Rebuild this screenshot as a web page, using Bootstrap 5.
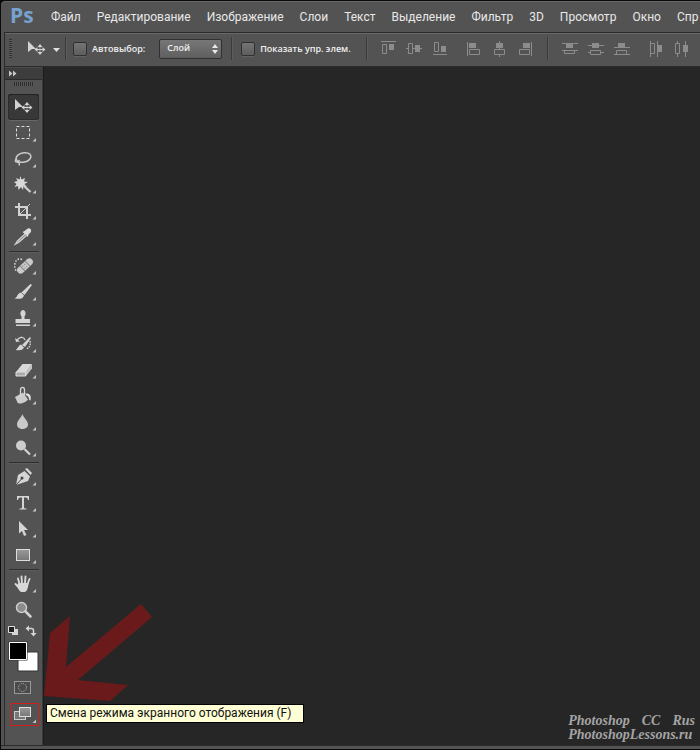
<!DOCTYPE html>
<html lang="ru">
<head>
<meta charset="utf-8">
<meta name="viewport" content="width=device-width, initial-scale=1">
<title>Photoshop CC</title>
<link href="https://cdn.jsdelivr.net/npm/bootstrap@5.3.0/dist/css/bootstrap.min.css" rel="stylesheet">
<style>
body{background:#535353;font-family:Roboto,"Noto Sans",sans-serif;color:#e6e6e6}
svg{display:block}
button{background:none;border:0;padding:0;color:inherit}
.app{border:1px solid #0a0a0a;border-right:0;border-top-left-radius:5px;background:#535353;overflow:hidden;box-shadow:inset 0 1px #666}
.corner{background:#0a0a0a}
.menubar{height:31px;padding-left:9px}
.logo{font:bold 21px/28px "Open Sans",sans-serif;color:#77a1cf;width:41px}
.menubar a{font-size:12px;line-height:32px;color:#e8e8e8;text-decoration:none;white-space:nowrap}
.menus{gap:16px}
.frame{margin-left:3px;border-left:1px solid #2b2b2b}
.options{height:35px;border-top:1px solid #2b2b2b;border-bottom:1px solid #2b2b2b;box-shadow:inset 0 1px #686868;padding:0 0 2px 4px}
.vgrip{width:3px;height:19px;background:repeating-linear-gradient(#303030 0 1px,#5c5c5c 1px 2px)}
.vline{width:2px;height:23px;background:#3a3a3a;border-right:1px solid #5c5c5c}
.options label{font:600 9px/14px "Open Sans",sans-serif;color:#f0f0f0;white-space:nowrap;margin-left:5px}
.tick{appearance:none;width:14px;height:14px;margin:0 0 0 6px;background:linear-gradient(#747474,#5e5e5e);border:1px solid #303030;border-radius:2px;box-shadow:0 1px #626262}
.tick:checked{background:#ddd}
.pick{position:relative;width:63px;height:20px;margin:0 9px 0 14px}
.pick select{display:block;appearance:none;width:100%;height:20px;border:1px solid #303030;border-radius:2px;background:linear-gradient(#777,#5f5f5f);color:#f0f0f0;font:600 9px/16px "Open Sans",sans-serif;padding:0 0 1px 7px}
.pick svg{position:absolute;right:4px;top:5px;pointer-events:none}
.al{width:26px;flex:none}
.al svg{margin:auto}
.first{margin:0 7px 0 15px}
.second{margin:0 8px}
.work{background:#262626}
.tools{width:38px;background:#535353;border-right:1px solid #3a3a3a;box-shadow:1px 0 #1d1d1d;position:relative}
.strip{height:13px;background:#3d3d3d;border-bottom:1px solid #2b2b2b;border-top:1px solid #4a4a4a}
.hgrip{width:20px;height:4px;margin:2px 0 8px 9px;background:repeating-linear-gradient(90deg,#2e2e2e 0 1px,#585858 1px 2px)}
.tool{display:block;width:31px;height:26px;margin-left:3px}
.tool.on{background:#383838;border-radius:3px;box-shadow:inset 0 1px #222,inset 0 0 0 1px #2c2c2c,0 1px #666}
.hsep{height:1px;margin:1px 4px;background:#2e2e2e;width:30px;box-shadow:0 1px #5c5c5c}
.screenmode{margin:8px 0 0 5px}
.swatches{display:block;margin-left:3px}
.tip{position:absolute;left:100%;top:637px;margin-left:4px;z-index:2;background:#ffffd5;border:1px solid #000;color:#111;font-size:12px;line-height:17px;padding:0 12px 0 3px;white-space:nowrap}
.arrow{position:absolute;left:100%;top:534px;margin-left:2px;pointer-events:none}
.sign{font:italic bold 14px/14px "Liberation Serif",serif;color:#a4a4a4;margin:0 5px 3px 0}
.sign .words{gap:12px}
.foot{height:4px;background:#535353;border-top:1px solid #2b2b2b}
</style>
<script src="https://cdn.jsdelivr.net/npm/bootstrap@5.3.0/dist/js/bootstrap.bundle.min.js"></script>
</head>
<body>
<svg width="0" height="0" class="position-absolute">
<defs>
<path id="c" d="M28 18v3.500h-3.500z" fill="#c4c4c4"/>
<linearGradient id="g" x2="0" y2="1"><stop stop-color="#999"/><stop offset="1" stop-color="#777"/></linearGradient>
<g id="mv"><path d="M7 5l8 8h-4l-4 3z" fill="#d2d2d2"/><path d="M14.500 13.500h9M19 9v9" stroke="#d2d2d2"/><path d="M19 8l2.500 3h-5zM19 19l2.500-3h-5zM13.500 13.500l3-2.500v5zM24.500 13.500l-3-2.500v5z" fill="#d2d2d2"/><path d="M17 11.500h1.500v1.500H17zM19.500 11.500H21V13h-1.500zM17 14h1.500v1.500H17zM19.500 14H21v1.500h-1.500z" fill="#555"/></g>
</defs>
</svg>
<div class="corner">
<div class="app d-flex flex-column min-vh-100">
<nav class="menubar d-flex">
<div class="logo flex-shrink-0">Ps</div>
<div class="menus d-flex">
<a href="#">Файл</a><a href="#">Редактирование</a><a href="#">Изображение</a><a href="#">Слои</a><a href="#">Текст</a><a href="#">Выделение</a><a href="#">Фильтр</a><a href="#">3D</a><a href="#">Просмотр</a><a href="#">Окно</a><a href="#">Спр</a>
</div>
</nav>
<div class="frame d-flex flex-column flex-grow-1">
<div class="options d-flex align-items-center overflow-hidden">
<div class="vgrip flex-shrink-0"></div>
<button class="flex-shrink-0 ms-2" aria-label="Перемещение"><svg width="45" height="26"><use href="#mv" x="1"/><path d="M33 12h7l-3.500 4z" fill="#e0e0e0"/></svg></button>
<div class="vline flex-shrink-0"></div>
<input class="tick flex-shrink-0" type="checkbox" id="auto"><label for="auto">Автовыбор:</label>
<div class="pick flex-shrink-0"><select aria-label="Автовыбор: объект"><option>Слой</option><option>Группа</option></select><svg width="6" height="10"><path d="M0 4l3-4 3 4zM0 6l3 4 3-4z" fill="#e8e8e8"/></svg></div>
<div class="vline flex-shrink-0"></div>
<input class="tick flex-shrink-0 ms-2" type="checkbox" id="ctl"><label for="ctl">Показать упр. элем.</label>
<div class="vline first flex-shrink-0"></div>
<button class="al" aria-label="По верхнему краю"><svg width="18" height="18" fill="none" stroke="#8c8c8c"><path d="M2 1.500h15M3.500 4.500h4v9h-4z"/><path d="M10 4h5v6h-5z" fill="#8c8c8c" stroke="none"/></svg></button>
<button class="al" aria-label="По центру по вертикали"><svg width="18" height="18" fill="none" stroke="#8c8c8c"><path d="M1 8.500h2.500M7.500 8.500H17M3.500 3.500h4v10h-4z"/><path d="M10 5h5v7h-5z" fill="#8c8c8c" stroke="none"/></svg></button>
<button class="al" aria-label="По нижнему краю"><svg width="18" height="18" fill="none" stroke="#8c8c8c"><path d="M2 14.500h14M3.500 2.500h4v9h-4z"/><path d="M10 6h5v6h-5z" fill="#8c8c8c" stroke="none"/></svg></button>
<button class="al ms-2" aria-label="По левому краю"><svg width="18" height="18" fill="none" stroke="#8c8c8c"><path d="M2.500 2v14M4.500 9.500h10v5h-10z"/><path d="M4 3h7v5H4z" fill="#8c8c8c" stroke="none"/></svg></button>
<button class="al" aria-label="По центру по горизонтали"><svg width="18" height="18" fill="none" stroke="#8c8c8c"><path d="M8.500 1v8M8.500 14v3M3.500 9.500h10v5h-10z"/><path d="M5 3h7v5H5z" fill="#8c8c8c" stroke="none"/></svg></button>
<button class="al" aria-label="По правому краю"><svg width="18" height="18" fill="none" stroke="#8c8c8c"><path d="M14.500 2v14M2.500 9.500h10v5h-10z"/><path d="M6 3h7v5H6z" fill="#8c8c8c" stroke="none"/></svg></button>
<div class="vline second flex-shrink-0"></div>
<button class="al" aria-label="Распределить верхние края"><svg width="18" height="18" fill="none" stroke="#8c8c8c"><path d="M1 3.500h16M1 10.500h16M3.500 10.500h10v3h-10z"/><path d="M5 4h7v4H5z" fill="#8c8c8c" stroke="none"/></svg></button>
<button class="al" aria-label="Распределить центры по вертикали"><svg width="18" height="18" fill="none" stroke="#8c8c8c"><path d="M1 5.500h16M1 12.500h2.500M13.500 12.500H17M3.500 10.500h10v4h-10z"/><path d="M5 3h7v5H5z" fill="#8c8c8c" stroke="none"/></svg></button>
<button class="al" aria-label="Распределить нижние края"><svg width="18" height="18" fill="none" stroke="#8c8c8c"><path d="M1 7.500h16M1 14.500h16M3.500 10.500h10v4h-10z"/><path d="M5 3h7v4H5z" fill="#8c8c8c" stroke="none"/></svg></button>
<button class="al ms-2" aria-label="Распределить левые края"><svg width="18" height="18" fill="none" stroke="#8c8c8c"><path d="M3.500 1v16M10.500 1v16M3.500 3.500h4v10h-4z"/><path d="M11 5h4v7h-4z" fill="#8c8c8c" stroke="none"/></svg></button>
<button class="al" aria-label="Распределить центры"><svg width="18" height="18" fill="none" stroke="#8c8c8c"><path d="M4.500 1v2.500M4.500 13.500V17M12.500 1v16M2.500 3.500h4v10h-4z"/><path d="M10 5h5v7h-5z" fill="#8c8c8c" stroke="none"/></svg></button>
</div>
<div class="work d-flex flex-grow-1">
<aside class="tools flex-shrink-0">
<div class="strip"><svg width="16" height="11"><path d="M4 2.500l3.500 3L4 8.500zM8 2.500l3.500 3L8 8.500z" fill="#c8c8c8"/></svg></div>
<div class="hgrip"></div>
<button class="tool on" aria-label="Перемещение"><svg width="31" height="26"><use href="#mv"/></svg></button>
<button class="tool" aria-label="Прямоугольная область"><svg width="31" height="26"><rect x="8.500" y="6.500" width="13" height="12" fill="none" stroke="#ddd" stroke-dasharray="3 2"/><use href="#c"/></svg></button>
<button class="tool" aria-label="Лассо"><svg width="31" height="26"><g fill="none" stroke="#ccc" stroke-width="1.500"><ellipse cx="15.500" cy="11.500" rx="7.500" ry="4.700" transform="rotate(-12 15.500 11.500)"/><path d="M8.500 13c-2 1-1 3.500.5 3s3-1 1.500-2M9 16c2 0 3 1 2 3.500"/></g><use href="#c"/></svg></button>
<button class="tool" aria-label="Волшебная палочка"><svg width="31" height="26"><path d="M12.500 4l1 3.500L17 6l-1 3.500 4 .5-3.500 2 2.500 3-3.500-1-.5 4-2-3-2.500 3-.5-4-3.500 1 2-3L6 10l3.500-1L8 6l3.500 1.500z" fill="#d8d8d8"/><path d="M16 14l6.500 6" stroke="#d0d0d0" stroke-width="2.200"/><use href="#c"/></svg></button>
<button class="tool" aria-label="Рамка"><svg width="31" height="26"><path d="M7 9h12v12M11 5v12h12" fill="none" stroke="#d2d2d2" stroke-width="2"/><path d="M12 16l10-10" stroke="#d2d2d2"/><use href="#c"/></svg></button>
<button class="tool" aria-label="Пипетка"><svg width="31" height="26"><path d="M17 10l-7.500 7-2 3 3-1.500 8-7" fill="#777" stroke="#d2d2d2" stroke-width="1.300"/><path d="M14.500 8l2-1 2.500-2c2.500-2 5.500 1 3.500 3.500l-2 2L20 13z" fill="#ddd"/><use href="#c"/></svg></button>
<div class="hsep"></div>
<button class="tool" aria-label="Восстанавливающая кисть"><svg width="31" height="26"><path d="M14 6.500c-8-3-9 9-5 12" fill="none" stroke="#ddd" stroke-width="1.500" stroke-dasharray="1.500 1.500"/><g transform="rotate(-43 17 13)"><rect x="7.500" y="9.500" width="19" height="7" rx="3.500" fill="#c9c9c9"/><path d="M13.500 9.500v7M20.500 9.500v7" stroke="#888"/><path d="M15 11.500h4M15 14.500h4" stroke="#777" stroke-dasharray="1 1.500"/></g><use href="#c"/></svg></button>
<button class="tool" aria-label="Кисть"><svg width="31" height="26"><path d="M22.500 5L24 6l-7.500 10-3-2.500z" fill="#d5d5d5"/><path d="M13 13.500l3 3c-1.500 4-5 3.500-9.500 3 3-1 2.500-5 6.500-6z" fill="#d5d5d5"/><use href="#c"/></svg></button>
<button class="tool" aria-label="Штамп"><svg width="31" height="26"><path d="M13.500 11.500c-2-2.500-1-6.500 1.500-6.500s3.500 4 1.500 6.500V14H22v4H7.500v-4h6zM8 19.500h14V21H8z" fill="#d5d5d5"/><use href="#c"/></svg></button>
<button class="tool" aria-label="Архивная кисть"><svg width="31" height="26"><path d="M9 9c4-4 7-3 8 0" fill="none" stroke="#ccc" stroke-width="1.500"/><path d="M7 7l1 4 4-.5zM22 6l1 1-6 9-3-2zM13 13.500l3 3c-1.500 3-4 3-8.500 2.500 2.500-1 2.500-4.500 5.500-5.500z" fill="#d5d5d5"/><path d="M22 10c1 5-1 7-4 8" fill="none" stroke="#ccc" stroke-width="1.500" stroke-dasharray="1.500 1"/><use href="#c"/></svg></button>
<button class="tool" aria-label="Ластик"><svg width="31" height="26"><path d="M14.500 7H24l-6 8.500-10-.5z" fill="#d8d8d8"/><path d="M8 15h9.500v4H8z" fill="#aaa" stroke="#ddd"/><path d="M18 15l6-8v4.500l-6 7.500z" fill="#c4c4c4"/><use href="#c"/></svg></button>
<button class="tool" aria-label="Заливка"><svg width="31" height="26"><path d="M7 14l8-4.500 5 7c-2 3-9 5.500-10.500 3z" fill="#cdcdcd"/><path d="M12.500 14V7c0-3.500 4-3.500 4 0v5" fill="none" stroke="#d8d8d8" stroke-width="1.300"/><path d="M17 10.500c5-.5 6.500 2 5.500 7-2.500 0-.500-4-3.500-4.500z" fill="#e0e0e0"/><use href="#c"/></svg></button>
<button class="tool" aria-label="Размытие"><svg width="31" height="26"><path d="M14.500 5c1 4 5.500 6.500 5.500 10.500 0 6-11 6-11 0C9 11.500 13 9 14.500 5z" fill="#c9c9c9"/><use href="#c"/></svg></button>
<button class="tool" aria-label="Осветлитель"><svg width="31" height="26"><circle cx="13" cy="10.500" r="5" fill="#cdcdcd"/><path d="M16.500 14l5.500 5.500" stroke="#d2d2d2" stroke-width="2.200"/><use href="#c"/></svg></button>
<div class="hsep"></div>
<button class="tool" aria-label="Перо"><svg width="31" height="26"><path d="M16.500 7l5.500 5.500-2 4.500-12 4 2-10z" fill="#d5d5d5"/><path d="M17 5l2-1 5 5-1.500 2z" fill="#d5d5d5"/><path d="M8 21l5.500-6" stroke="#444"/><circle cx="14" cy="14" r="1.500" fill="#444"/><use href="#c"/></svg></button>
<button class="tool" aria-label="Текст"><svg width="31" height="26"><path d="M9 6h12v4h-1c-.5-2-1-2.500-4-2.500V17c0 1 .5 1.500 2.500 1.500v1h-7v-1c2 0 2.500-.5 2.500-1.500V7.500c-3 0-3.500.5-4 2.500H9z" fill="#d5d5d5"/><use href="#c"/></svg></button>
<button class="tool" aria-label="Выделение контура"><svg width="31" height="26"><path d="M11 5l9 9h-4l2.500 5-2.500 1-2-5-3 2.500z" fill="#d5d5d5"/><use href="#c"/></svg></button>
<button class="tool" aria-label="Прямоугольник"><svg width="31" height="26"><rect x="8.500" y="7.500" width="13" height="11" fill="url(#g)" stroke="#ddd"/><use href="#c"/></svg></button>
<div class="hsep"></div>
<button class="tool" aria-label="Рука"><svg width="31" height="26"><path d="M11.500 13L10 7.500M14 12l-.500-6.500M17 12l.5-6.500M19.500 13L21.500 8M11 16.500L7.500 13" stroke="#d8d8d8" stroke-width="1.900" stroke-linecap="round"/><path d="M10.500 12h10c0 4-1.500 9-4 9h-3c-2 0-3.500-4-5-6z" fill="#d8d8d8"/><use href="#c"/></svg></button>
<button class="tool" aria-label="Масштаб"><svg width="31" height="26"><circle cx="13.500" cy="10.500" r="5" fill="#8c8c8c" stroke="#ccc" stroke-width="1.500"/><path d="M17.500 14.500l5 5" stroke="#d2d2d2" stroke-width="2.500" stroke-linecap="round"/></svg></button>
<button class="swatches" aria-label="Основной и фоновый цвета"><svg width="31" height="50">
<path d="M4 6h6v6H4z" fill="#d5d5d5"/><path d="M.5 3.500h6v6h-6z" fill="#222" stroke="#ddd"/>
<path d="M19.500 5.500h4q2 0 2 2v4" fill="none" stroke="#d5d5d5" stroke-width="1.500"/><path d="M21 2.500v6L17.500 5.500zM22.500 10h6L25.500 13.500z" fill="#d5d5d5"/>
<path d="M10 29h20v19H10z" fill="#fff" stroke="#333"/><path d="M.5 18.500h19v19H.5z" fill="#333"/><path d="M1.500 19.500h17v17h-17z" fill="#000" stroke="#fff"/></svg></button>
<button class="swatches mt-2" aria-label="Быстрая маска"><svg width="31" height="14"><rect x="6.500" y=".5" width="16" height="12" fill="#4b4b4b" stroke="#999"/><circle cx="14.500" cy="6.500" r="4" fill="none" stroke="#bbb" stroke-dasharray="1 1.100"/></svg></button>
<button class="screenmode d-block" aria-label="Режим экрана" aria-describedby="tip"><svg width="29" height="24"><rect x=".5" y=".5" width="28" height="22" fill="none" stroke="#d02020"/><rect x="4.500" y="8.500" width="11" height="8" fill="#777" stroke="#ccc"/><rect x="9.500" y="4.500" width="11" height="9" fill="url(#g)" stroke="#ddd"/><path d="M26 16.500V20h-3.500z" fill="#c4c4c4"/></svg></button>
<svg class="arrow" width="112" height="102"><path d="M97 3l11 13-74 63 50 5-18 16-66-5 6-63 20-17-4 51z" fill="#6b1a1b"/></svg>
<div class="tip" id="tip" role="tooltip">Смена режима экранного отображения (F)</div>
</aside>
<main class="flex-grow-1 d-flex justify-content-end align-items-end">
<div class="sign"><div class="words d-flex justify-content-end"><span>Photoshop</span><span>CC</span><span>Rus</span></div><div>PhotoshopLessons.ru</div></div>
</main>
</div>
</div>
<div class="foot"></div>
</div>
</div>
</body>
</html>
